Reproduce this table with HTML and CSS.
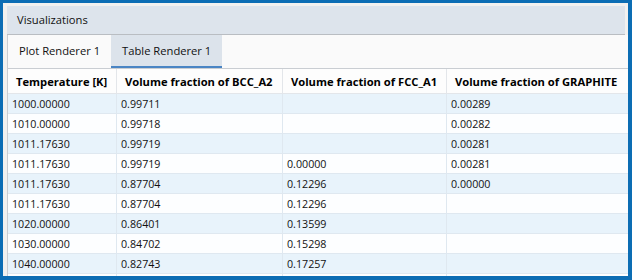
FILE: index.html
```html
<!DOCTYPE html>
<html lang="en">
<head>
    <meta charset="UTF-8">
    <title>Visualizations</title>
    <link rel="stylesheet" href="styles.css">
</head>
<body>
    <div class="frame">
        <div class="panel-title">Visualizations</div>
        <div class="tabs">
            <div class="tab">Plot Renderer 1</div>
            <div class="tab active">Table Renderer 1</div>
        </div>
        <div class="table-wrap">
            <table class="results">
                <colgroup>
                    <col class="c1">
                    <col class="c2">
                    <col class="c3">
                    <col class="c4">
                </colgroup>
                <thead>
                    <tr>
                        <th>Temperature [K]</th>
                        <th>Volume fraction of BCC_A2</th>
                        <th>Volume fraction of FCC_A1</th>
                        <th>Volume fraction of GRAPHITE</th>
                    </tr>
                </thead>
                <tbody>
                    <tr><td>1000.00000</td><td>0.99711</td><td></td><td>0.00289</td></tr>
                    <tr><td>1010.00000</td><td>0.99718</td><td></td><td>0.00282</td></tr>
                    <tr><td>1011.17630</td><td>0.99719</td><td></td><td>0.00281</td></tr>
                    <tr><td>1011.17630</td><td>0.99719</td><td>0.00000</td><td>0.00281</td></tr>
                    <tr><td>1011.17630</td><td>0.87704</td><td>0.12296</td><td>0.00000</td></tr>
                    <tr><td>1011.17630</td><td>0.87704</td><td>0.12296</td><td></td></tr>
                    <tr><td>1020.00000</td><td>0.86401</td><td>0.13599</td><td></td></tr>
                    <tr><td>1030.00000</td><td>0.84702</td><td>0.15298</td><td></td></tr>
                    <tr><td>1040.00000</td><td>0.82743</td><td>0.17257</td><td></td></tr>
                    <!-- next row only peeks in under the fold -->
                    <tr><td></td><td></td><td></td><td></td></tr>
                </tbody>
            </table>
        </div>
    </div>
</body>
</html>
```

FILE: styles.css
```css
html, body {
    margin: 0;
    padding: 0;
    height: 280px;
    overflow: hidden;
}
body {
    background-color: #0c6db4;
    font-family: 'Open Sans', 'Noto Sans', sans-serif;
    color: #111;
}
.frame {
    margin: 3px 4px 0 3px;
    height: 273px;
    padding: 3px 0 0 4px;
    box-sizing: border-box;
    background-color: #f2f1ef;
    overflow: hidden;
    display: flex;
    flex-direction: column;
}
.panel-title {
    height: 28px;
    margin-right: 3px;
    padding-left: 10px;
    background-color: #dde4ec;
    border-bottom: 1px solid #b9bdc2;
    font-size: 11.2px;
    line-height: 28px;
    color: #111;
}
.tabs {
    display: flex;
    height: 33px;
    background-color: #fafafa;
    border-left: 1px solid #c9cdd2;
}
.tab {
    padding: 0 11px;
    font-size: 11.2px;
    line-height: 31px;
    border-bottom: 2px solid transparent;
    color: #111;
}
.tab.active {
    background-color: #dce3eb;
    border-bottom-color: #4a85c4;
}
.table-wrap {
    flex: 1;
    overflow: hidden;
    border-top: 1px solid #c9cdd2;
    border-left: 1px solid #c9cdd2;
    background-color: #fff;
}
.results {
    table-layout: fixed;
    border-collapse: separate;
    border-spacing: 0;
    width: 621px;
}
.results .c1 { width: 109px; }
.results .c2 { width: 166px; }
.results .c3 { width: 164px; }
.results .c4 { width: 182px; }
.results th {
    height: 24px;
    padding: 0 8px;
    font-size: 11.2px;
    font-weight: bold;
    text-align: left;
    white-space: nowrap;
    background-color: #fdfdfd;
    border-right: 1px solid #e3e6ea;
    border-bottom: 1px solid #e3e6ea;
    color: #000;
}
.results td {
    height: 19px;
    padding: 0 4px;
    font-size: 10.7px;
    white-space: nowrap;
    border-right: 1px solid #dfe8f0;
    border-bottom: 1px solid #dfe8f0;
    background-color: #fdfeff;
}
.results tbody tr:nth-child(odd) td {
    background-color: #e8f3fb;
}
.results th:last-child,
.results td:last-child {
    border-right: none;
}
```
